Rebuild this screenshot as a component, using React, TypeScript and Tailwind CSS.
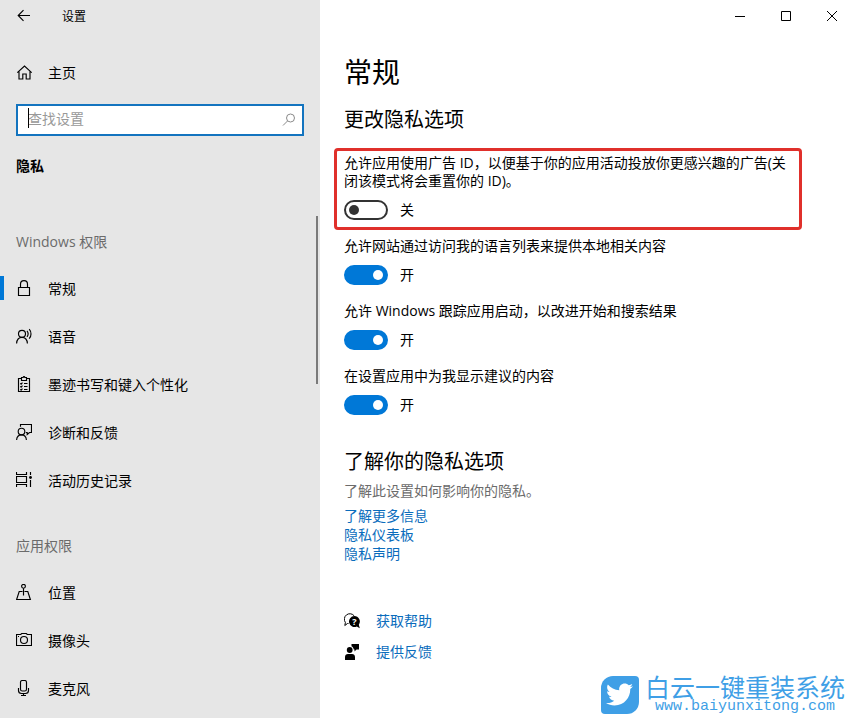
import React, { useState } from 'react';
import { FaTwitter } from 'react-icons/fa';

type NavItem = { label: string; icon: React.ReactNode };

function Icon({ children }: { children: React.ReactNode }) {
  return (
    <svg viewBox="0 0 16 16" className="w-4 h-4 shrink-0" fill="none" stroke="currentColor" strokeWidth="1.15" aria-hidden="true">
      {children}
    </svg>
  );
}

const WINDOWS_PERMISSIONS: NavItem[] = [
  {
    label: '常规',
    icon: <Icon><path d="M2.500 7.500h11v8h-11zM4.500 7.500V4.200C4.500 2 6 .6 8 .6s3.500 1.400 3.500 3.600v3.300" /></Icon>,
  },
  {
    label: '语音',
    icon: (
      <Icon>
        <circle cx="6" cy="5.800" r="3.500" />
        <path d="M.6 15.500C.8 11.700 3 9.300 6 9.300s5.200 2.400 5.400 6.200M11 2.800c1.300 1.700 1.300 4.300 0 6M13.200 1.200c2.400 2.700 2.400 6.800 0 9.500" />
      </Icon>
    ),
  },
  {
    label: '墨迹书写和键入个性化',
    icon: (
      <Icon>
        <path d="M5.500 2.500h-3v13h11v-13h-3M5.500 4.500v-3h1.700c.1-1.300 1.500-1.300 1.600 0h1.700v3zM8 7.500h3.500M8 10.500h3.500M8 13.500h3.500M4.300 7.300l.8.8 1.400-1.500M4.300 10.300l.8.8 1.400-1.500M4.300 13.300l.8.8 1.400-1.500" />
      </Icon>
    ),
  },
  {
    label: '诊断和反馈',
    icon: (
      <Icon>
        <circle cx="5.500" cy="7.500" r="3.300" />
        <path d="M.6 16c.2-3.300 2.200-5.200 4.900-5.200s4.700 1.900 4.900 5.200M4.500 2.800V.5h11v8h-2l-2.300 2V8.500H9.800" />
      </Icon>
    ),
  },
  {
    label: '活动历史记录',
    icon: (
      <Icon>
        <path d="M.5 0v2.500h10V0M.5 4.500h10v6H.5zM.5 15v-2.500h10V15M14.500 0v3M14.500 8v7" />
        <circle cx="14.500" cy="5.500" r="1.400" fill="currentColor" stroke="none" />
      </Icon>
    ),
  },
];

const APP_PERMISSIONS: NavItem[] = [
  {
    label: '位置',
    icon: (
      <Icon>
        <circle cx="7.500" cy="2.300" r="1.900" />
        <path d="M7.500 4.200v7.300M6.500 7.500H3.200l-2.600 8h13.800l-2.600-8H8.500" />
      </Icon>
    ),
  },
  {
    label: '摄像头',
    icon: (
      <Icon>
        <path d="M.5 2.500h4.200l1-1h4.600l1 1h4.200v11H.5z" />
        <circle cx="8" cy="8" r="3.500" />
        <path d="M2 4.500h1" />
      </Icon>
    ),
  },
  {
    label: '麦克风',
    icon: (
      <Icon>
        <rect x="4.500" y=".5" width="6" height="10.500" rx="1.800" />
        <path d="M2.500 8v2.500c0 2 1.200 3 3 3h4c1.800 0 3-1 3-3V8M7.500 13.500v2M5 15.500h5" />
      </Icon>
    ),
  },
];

const SETTINGS = [
  { id: 'ad-id', label: '允许应用使用广告 ID，以便基于你的应用活动投放你更感兴趣的广告(关闭该模式将会重置你的 ID)。', highlighted: true, on: false },
  { id: 'language-list', label: '允许网站通过访问我的语言列表来提供本地相关内容', highlighted: false, on: true },
  { id: 'track-launch', label: '允许 Windows 跟踪应用启动，以改进开始和搜索结果', highlighted: false, on: true },
  { id: 'suggestions', label: '在设置应用中为我显示建议的内容', highlighted: false, on: true },
];

const PRIVACY_LINKS = ['了解更多信息', '隐私仪表板', '隐私声明'];

function NavGroup({ title, items, active }: { title: string; items: NavItem[]; active?: string }) {
  return (
    <section>
      <h2 className="h-12 px-4 pt-1 flex items-center text-[#6b6b6b]">{title}</h2>
      <ul>
        {items.map(item => (
          <li key={item.label}>
            <a href="#" className="relative h-12 px-4 flex items-center gap-4 hover:bg-black/5">
              {item.label === active && <span className="absolute left-0 top-3 w-1 h-6 bg-[#0078d7]" />}
              {item.icon}
              <span className="pt-0.5">{item.label}</span>
            </a>
          </li>
        ))}
      </ul>
    </section>
  );
}

function Toggle({ id, label, defaultOn, highlighted }: { id: string; label: string; defaultOn: boolean; highlighted: boolean }) {
  const [on, setOn] = useState(defaultOn);

  return (
    <div className={highlighted ? '-mx-2.5 mb-[7px] px-[7px] pt-[3px] pb-[7px] border-3 border-[#e0302b] rounded-sm' : 'mb-[17px]'}>
      <label htmlFor={id} className="block leading-[18px]">{label}</label>
      <div className="mt-2.5 flex items-center gap-3">
        <input
          id={id}
          type="checkbox"
          role="switch"
          checked={on}
          onChange={e => setOn(e.target.checked)}
          className="appearance-none w-11 h-5 rounded-full border-2 border-[#333] flex items-center px-[3px] before:w-2.5 before:h-2.5 before:rounded-full before:bg-[#333] checked:bg-[#0078d7] checked:border-[#0078d7] checked:justify-end checked:before:bg-white"
        />
        <span className="leading-5">{on ? '开' : '关'}</span>
      </div>
    </div>
  );
}

function Sidebar() {
  return (
    <aside className="w-80 shrink-0 bg-[#e6e6e6] flex flex-col">
      <div className="h-8 px-4 flex items-center gap-[30px]">
        <button type="button" aria-label="返回">
          <Icon><path d="M14 7.500H2.500M7.500 2.200L2.200 7.500l5.300 5.300" /></Icon>
        </button>
        <span className="pt-0.5 text-xs">设置</span>
      </div>

      <a href="#" className="mt-4 h-12 px-4 flex items-center gap-4">
        <Icon><path d="M1.800 8.200L9 1.500l7.200 6.700M3.500 7v7.500h3.800V9.500h3.400v5h3.800V7" transform="translate(-.5 .5)" /></Icon>
        <span className="pt-0.5">主页</span>
      </a>

      <div className="relative mt-2 mx-4">
        <input
          type="text"
          aria-label="查找设置"
          placeholder="查找设置"
          className="block w-full h-8 pl-2.5 pr-8 pb-1 bg-white border-2 border-[#1374bf] outline-none caret-transparent placeholder:text-[#999]"
        />
        <span className="absolute left-3 top-1 w-px h-5 bg-black" />
        <svg viewBox="0 0 16 16" className="absolute right-2 top-2 w-4 h-4 text-[#8a8a8a]" fill="none" stroke="currentColor" aria-hidden="true">
          <circle cx="10.500" cy="6" r="4" />
          <path d="M7.500 9L3 13.500" />
        </svg>
      </div>

      <h1 className="mt-4 px-4 leading-7 font-bold">隐私</h1>

      <nav className="relative mt-9">
        <NavGroup title="Windows 权限" items={WINDOWS_PERMISSIONS} active="常规" />
        <div className="mt-4">
          <NavGroup title="应用权限" items={APP_PERMISSIONS} />
        </div>
        <span className="absolute right-0.5 top-0 w-0.5 h-42 bg-[#7a7a7a]" />
      </nav>
    </aside>
  );
}

function WindowControls() {
  return (
    <div className="h-8 flex justify-end">
      <button type="button" aria-label="最小化" className="w-[46px] flex items-center justify-center">
        <svg viewBox="0 0 10 10" className="w-2.5 h-2.5" stroke="currentColor"><path d="M0 5.500h10" /></svg>
      </button>
      <button type="button" aria-label="最大化" className="w-[46px] flex items-center justify-center">
        <svg viewBox="0 0 10 10" className="w-2.5 h-2.5" fill="none" stroke="currentColor"><path d="M.5.5h9v9h-9z" /></svg>
      </button>
      <button type="button" aria-label="关闭" className="w-[46px] flex items-center justify-center">
        <svg viewBox="0 0 10 10" className="w-2.5 h-2.5" stroke="currentColor"><path d="M0 0l10 10M10 0L0 10" /></svg>
      </button>
    </div>
  );
}

function Watermark() {
  return (
    <div className="absolute right-2.5 bottom-1 flex items-center gap-1.5 text-[#3f9fe6]">
      <div className="w-[38px] h-[38px] flex items-center justify-center bg-[#3f9fe6] text-white rounded-sm rounded-tl-xl rounded-br-xl">
        <FaTwitter className="w-[27px] h-[27px]" />
      </div>
      <div className="flex flex-col items-center">
        <span className="text-[25px] leading-[25px]">白云一键重装系统</span>
        <span className="text-[15px] leading-[14px] font-['Liberation_Mono',monospace]">www.baiyunxitong.com</span>
      </div>
    </div>
  );
}

export default function App() {
  return (
    <div className="relative min-h-screen flex bg-white text-black text-sm font-['Open_Sans','Noto_Sans_CJK_SC',sans-serif]">
      <Sidebar />

      <div className="flex-1 min-w-0">
        <WindowControls />

        <main className="pl-6 pr-[63px]">
          <h1 className="mt-5 text-[28px] leading-10">常规</h1>
          <h2 className="mt-4 text-xl leading-6">更改隐私选项</h2>

          <div className="mt-4">
            {SETTINGS.map(s => (
              <Toggle key={s.id} id={s.id} label={s.label} defaultOn={s.on} highlighted={s.highlighted} />
            ))}
          </div>

          <h2 className="mt-[35px] text-xl leading-6">了解你的隐私选项</h2>
          <p className="mt-[7px] leading-5 text-[#6b6b6b]">了解此设置如何影响你的隐私。</p>
          <ul className="mt-[5px] leading-[19px] text-[#0a6cbc]">
            {PRIVACY_LINKS.map(link => (
              <li key={link}><a href="#" className="hover:text-gray-500">{link}</a></li>
            ))}
          </ul>

          {/* Help & feedback */}
          <div className="mt-12 flex flex-col gap-[11px] leading-5">
            <div className="flex items-center gap-4">
              <svg viewBox="0 0 16 16" className="w-4 h-4 shrink-0" aria-hidden="true">
                <path d="M4.500 10.500H3.500L.8 12.500l.6-3A5 5 0 1 1 10.300 3" fill="none" stroke="currentColor" />
                <path d="M10.300 3a5.500 5.500 0 1 0 2.500 10.500l3 1.700-1-3.500A5.500 5.500 0 0 0 10.300 3z" fill="currentColor" />
                <text x="10.300" y="12" fontSize="9" fontWeight="700" textAnchor="middle" fill="#fff">?</text>
              </svg>
              <a href="#" className="text-[#0a6cbc] hover:text-gray-500">获取帮助</a>
            </div>
            <div className="flex items-center gap-4">
              <svg viewBox="0 0 16 16" className="w-4 h-4 shrink-0" fill="currentColor" aria-hidden="true">
                <circle cx="5.700" cy="6" r="2.900" />
                <path d="M1 16v-3c0-1.800 1.200-3 3-3h4c1.800 0 3 1.200 3 3v3zM7.500 0H15v5.500h-2.500l-2 2V5.500H9.800C9.500 3.800 8.700 2.700 7.500 2.200z" />
              </svg>
              <a href="#" className="text-[#0a6cbc] hover:text-gray-500">提供反馈</a>
            </div>
          </div>
        </main>
      </div>

      <Watermark />
    </div>
  );
}
